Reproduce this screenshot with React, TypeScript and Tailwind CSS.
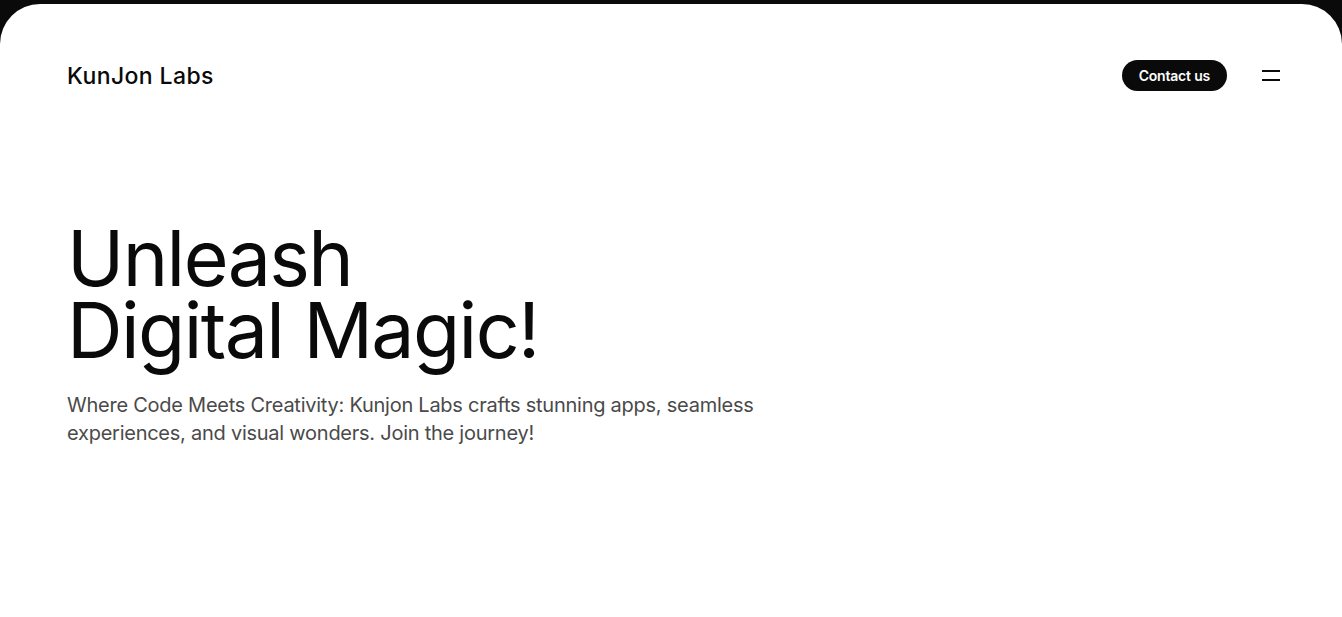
import { useState } from 'react';

export default function App() {
  const [open, setOpen] = useState(false);

  return (
    <div className="min-h-screen bg-[#0a0a0a] pt-[4px]" style={{ fontFamily: 'Inter, "Noto Sans", sans-serif' }}>
      <div className="min-h-[613px] bg-white rounded-t-[40px] pl-[67px] pr-[62px]">
        {/* Header */}
        <header className="flex items-center justify-between pt-[56px]">
          <a href="#" className="text-[23px] font-medium tracking-[0.4px] text-[#0a0a0a] leading-[30px]">
            KunJon Labs
          </a>
          <div className="flex items-center gap-[35px]">
            <button className="h-[31px] px-[17px] rounded-full bg-[#0a0a0a] text-white text-[14px] font-semibold tracking-[-0.2px]">
              Contact us
            </button>
            <button
              aria-label="Toggle menu"
              onClick={() => setOpen(!open)}
              className="flex flex-col gap-[7px] w-[18px] py-[2px]"
            >
              <span className="block h-[2px] w-full bg-[#0a0a0a]" />
              <span className="block h-[2px] w-full bg-[#0a0a0a]" />
            </button>
          </div>
        </header>

        {/* Hero */}
        <section className="pt-[131px]">
          <h1 className="text-[77px] leading-[72px] font-normal tracking-[-1.6px] text-[#0a0a0a]">
            <span className="block">Unleash</span>
            <span className="block">Digital Magic!</span>
          </h1>
          <p className="mt-[25px] max-w-[720px] text-[20px] leading-[28px] text-[#4a4a4a] tracking-[-0.25px]">
            Where Code Meets Creativity: Kunjon Labs crafts stunning apps, seamless experiences, and visual wonders. Join the journey!
          </p>
        </section>
      </div>
    </div>
  );
}
